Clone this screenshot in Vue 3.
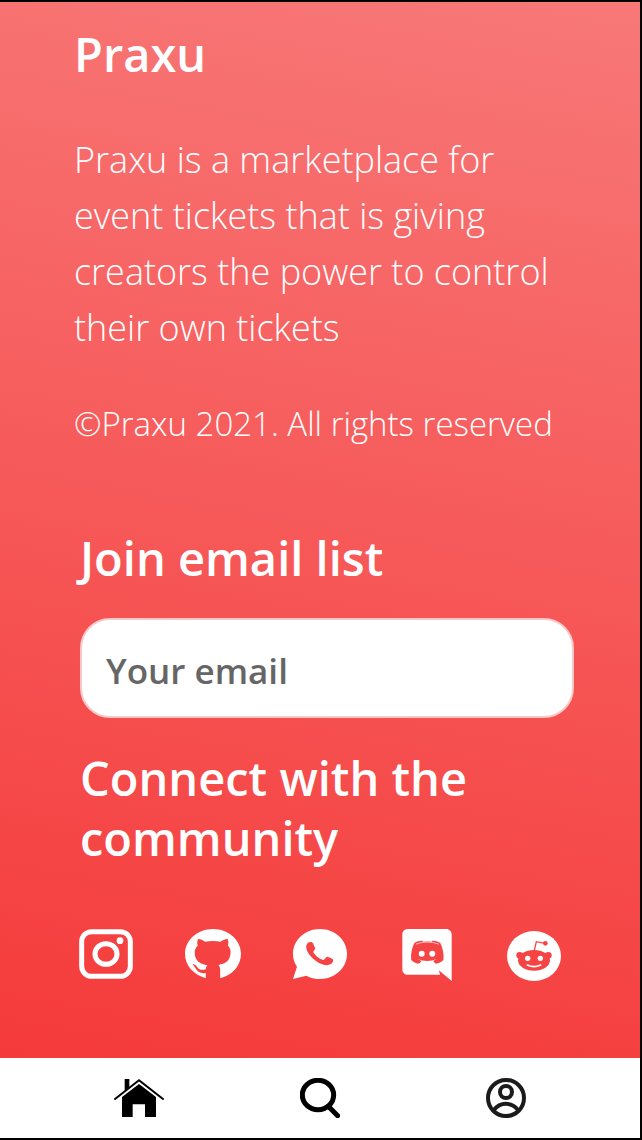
<script setup>
import { ref } from 'vue'

const email = ref('')
</script>

<template>
  <div class="page">
    <footer class="footer">
      <section class="about">
        <h1>Praxu</h1>
        <p class="intro">Praxu is a marketplace for event tickets that is giving creators the power to control their own tickets</p>
        <p class="copyright">©Praxu 2021. All rights reserved</p>
      </section>
      <section class="contact">
        <h2><label for="email">Join email list</label></h2>
        <input id="email" v-model="email" type="email" placeholder="Your email" />
        <h2>Connect with the community</h2>
        <div class="social">
          <a href="#instagram" aria-label="Instagram">
            <svg width="54" height="50" viewBox="0 0 162 150">
              <rect x="8" y="8" width="146" height="134" rx="30" class="line" />
              <ellipse cx="81" cy="75" rx="33" ry="31" class="line" />
              <circle cx="123" cy="35" r="10" />
            </svg>
          </a>
          <a href="#github" aria-label="GitHub">
            <svg width="56" height="50" viewBox="376 42 167 149">
              <path d="M438 189C400 178 376 150 376 116C376 75 413 42 459.500 42C506 42 543 75 543 116C543 150 518 180 481 189L481 165C481 157 479 153 476 149C495 146 512 138 512 110C512 101 508 96 504 91C506 86 506 79 503 72C495 72 486 77 482 80C468 77 450 77 436 80C430 76 422 72 415 72C412 79 412 86 414 91C409 97 405 102 405 112C405 138 422 147 443 150C440 153 438 157 438 162C425 166 418 163 412 155C408 149 403 146 398 148C402 151 405 154 408 160C414 172 424 175 438 173Z" />
            </svg>
          </a>
          <a href="#whatsapp" aria-label="WhatsApp">
            <svg width="54" height="50" viewBox="39 42 162 150">
              <path d="M120 42C165 42 201 75 201 117C201 159 165 192 120 192C105 192 91 189 79 182L39 192L51 155C43 144 39 131 39 117C39 75 75 42 120 42Z" />
              <path class="cut" d="M84 83C89 80 96 80 99 85L105 98C107 104 99 107 100 112C106 123 117 131 129 135C134 136 137 124 143 125L157 131C162 135 158 144 153 147C137 157 111 143 97 129C84 116 71 94 84 83Z" />
            </svg>
          </a>
          <a href="#discord" aria-label="Discord">
            <svg width="50" height="52" viewBox="366 42 150 158">
              <path d="M383 42H499C509 42 516 49 516 59V200L477 167L481 181H383C373 181 366 174 366 164V59C366 49 373 42 383 42Z" />
              <path class="cut" d="M403 84C412 79 420 77 427 78L429 81C437 80 447 80 455 81L457 78C464 77 473 80 481 84C489 100 493 119 491 136C484 143 474 147 466 147L460 139L470 133C453 141 430 141 413 133L424 139L418 147C409 147 400 143 393 136C391 118 395 100 403 84Z" />
              <path class="detail" d="M407 88Q442 75 477 88" />
              <circle cx="425" cy="117" r="9" />
              <circle cx="457" cy="117" r="9" />
            </svg>
          </a>
          <a href="#reddit" aria-label="Reddit">
            <svg width="54" height="50" viewBox="51 48 162 150">
              <ellipse cx="132" cy="123" rx="81" ry="75" />
              <g class="cut">
                <ellipse cx="132" cy="136" rx="48" ry="31" />
                <circle cx="89" cy="121" r="10" />
                <circle cx="175" cy="121" r="10" />
                <circle cx="166" cy="85" r="7" />
              </g>
              <path class="antenna" d="M133 106L139 80L165 85" />
              <circle cx="113" cy="130" r="8" />
              <circle cx="151" cy="130" r="8" />
              <path class="smile" d="M112 150Q132 160 152 150" />
            </svg>
          </a>
        </div>
      </section>
    </footer>
    <nav class="tabs">
      <a href="#home" aria-label="Home">
        <svg width="50" height="38" viewBox="72 84 150 114">
          <path d="M104 84H118V108L104 119Z" />
          <path class="roof" d="M75 144L147 88L219 144" />
          <path d="M147 99L198 138V198H165V160H128V198H96V138Z" />
        </svg>
      </a>
      <a href="#search" aria-label="Search">
        <svg width="40" height="40" viewBox="0 0 120 120">
          <ellipse cx="54" cy="51" rx="47" ry="44" />
          <path d="M87 87L113 113" />
        </svg>
      </a>
      <a href="#profile" aria-label="Profile">
        <svg width="40" height="40" viewBox="0 0 120 120">
          <circle cx="60" cy="60" r="54" />
          <circle cx="60" cy="42" r="18" />
          <path d="M23 97C42 71 78 71 97 97" />
        </svg>
      </a>
    </nav>
  </div>
</template>

<style>
body {
  background: #000;
}
</style>

<style scoped>
.page {
  box-sizing: border-box;
  min-height: 100vh;
  display: flex;
  flex-direction: column;
  border: solid #000;
  border-width: 2px 2px 2px 0;
  font-family: "Open Sans", "Noto Sans", sans-serif;
}
.footer {
  flex: 1;
  padding: 18px 66px 74px 74px;
  color: #fff;
  background: linear-gradient(190deg, #f87878, #f53a3a);
}
h1,
h2,
p {
  margin: 0;
}
h1,
h2 {
  font-size: 47px;
  line-height: 60px;
  font-weight: 600;
}
h1 {
  line-height: 68px;
}
.intro {
  margin-top: 44px;
  font-size: 36px;
  line-height: 56px;
  font-weight: 300;
}
.copyright {
  margin-top: 46px;
  font-size: 33px;
  line-height: 44px;
  font-weight: 300;
  white-space: nowrap;
}
.contact {
  margin-top: 82px;
  padding-left: 6px;
}
input {
  box-sizing: border-box;
  display: block;
  width: 100%;
  height: 100px;
  margin: 30px 0;
  padding: 4px 24px 0;
  border: 2px solid #f9c8c8;
  border-radius: 30px;
  background: #fff;
  font: 600 35px "Open Sans", "Noto Sans", sans-serif;
  color: #666;
  outline: none;
}
input::placeholder {
  color: #666;
  opacity: 1;
}
.social {
  display: flex;
  justify-content: space-between;
  margin: 61px 12px 0 -2px;
}
.social a {
  display: flex;
  justify-content: center;
  align-items: flex-start;
  width: 56px;
  height: 52px;
}
.social a:last-child {
  align-items: flex-end;
}
.social svg {
  display: block;
  fill: #fff;
}
.social .line {
  fill: none;
  stroke: #fff;
  stroke-width: 15;
}
.social .cut {
  fill: #f64444;
}
.detail,
.smile {
  fill: none;
  stroke: #fff;
  stroke-width: 2;
}
.smile {
  stroke-width: 5;
  stroke-linecap: round;
}
.antenna {
  fill: none;
  stroke: #f64444;
  stroke-width: 4;
}
.tabs {
  box-sizing: border-box;
  height: 80px;
  display: flex;
  align-items: center;
  justify-content: space-between;
  padding: 0 114px;
  background: #fff;
}
.tabs a {
  display: flex;
  width: 50px;
}
.tabs a:last-child {
  width: 40px;
}
.tabs a:not(:first-child) svg {
  fill: none;
  stroke: #000;
  stroke-width: 15;
  stroke-linecap: round;
}
.tabs a:last-child svg {
  stroke: #1b1b1b;
  stroke-width: 12;
}
.roof {
  fill: none;
  stroke: #000;
  stroke-width: 6;
  stroke-linecap: round;
}
</style>
